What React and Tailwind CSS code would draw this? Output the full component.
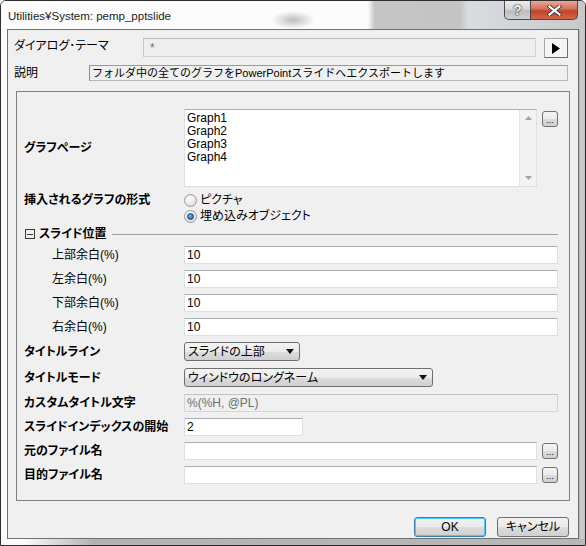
const jpFont = "[font-family:'Liberation_Sans','Noto_Sans_CJK_JP',sans-serif] [font-feature-settings:'palt']";

function Tri({ dir = "down" }) {
  if (dir === "right") {
    return (
      <svg width="8" height="11" viewBox="0 0 8 11">
        <path d="M0 0 L8 5.5 L0 11 Z" fill="#000" />
      </svg>
    );
  }
  return (
    <svg width="8" height="5" viewBox="0 0 8 5">
      <path d="M0 0 L8 0 L4 5 Z" fill="#111" />
    </svg>
  );
}

function DotsBtn({ className = "" }) {
  return (
    <div
      className={`w-[16px] h-[16px] rounded-[3px] border border-[#707070] bg-[linear-gradient(#f4f4f4_0%,#ececec_50%,#dcdcdc_51%,#d0d0d0_100%)] flex items-end justify-center text-[9px] leading-[10px] pb-[1px] ${className}`}
    >
      ...
    </div>
  );
}

function Combo({ text, className = "" }) {
  return (
    <div
      className={`h-[19px] rounded-[3px] border border-[#707070] bg-[linear-gradient(#f3f3f3_0%,#ebebeb_50%,#dddddd_51%,#cfcfcf_100%)] flex items-center pl-[3px] pr-[5px] text-[12px] ${className}`}
    >
      <span className="flex-1">{text}</span>
      <Tri />
    </div>
  );
}

function TextBox({ value, className = "", disabled }) {
  return (
    <div
      className={`h-[18px] border flex items-center px-[2px] text-[12px] leading-[16px] ${
        disabled
          ? "bg-[#f0f0f0] border-[#d5d5d5] border-t-[#c2c2c2] text-[#6d6d6d]"
          : "bg-white border-[#dbdfe6] border-t-[#abadb3]"
      } ${className}`}
    >
      {value}
    </div>
  );
}

function Radio({ checked }) {
  return (
    <div className="w-[13px] h-[13px] rounded-full border border-[#9a9a9a] bg-[radial-gradient(circle_at_40%_35%,#ffffff,#d4d4d4)] flex items-center justify-center">
      {checked && (
        <div className="w-[7px] h-[7px] rounded-full border border-[#1f4777] bg-[radial-gradient(circle_at_40%_35%,#6fb6ec,#174f92)]" />
      )}
    </div>
  );
}

function Row({ label, labelClass = "pl-[7px] font-bold", className = "", children }) {
  return (
    <div className={`flex items-center ${className}`}>
      <div className={`w-[167px] text-[12px] leading-[16px] shrink-0 ${labelClass}`}>{label}</div>
      {children}
    </div>
  );
}

function WinButton({ children, primary }) {
  return (
    <div
      className={`w-[72px] h-[20px] rounded-[3px] border flex items-center justify-center text-[12px] bg-[linear-gradient(#f2f2f2_0%,#ebebeb_50%,#dddddd_51%,#cfcfcf_100%)] ${
        primary ? "border-[#3c7fb1] shadow-[inset_0_0_0_1px_#4fc8f4]" : "border-[#707070]"
      }`}
    >
      {children}
    </div>
  );
}

export default function App() {
  return (
    <div
      className={`w-[586px] h-[546px] border border-[#2e2e2e] rounded-t-[6px] overflow-hidden flex flex-col text-black ${jpFont}`}
    >
      {/* title bar */}
      <div className="h-[28px] flex items-start [background-image:radial-gradient(ellipse_22px_9px_at_292px_19px,#bdbdbd,rgba(252,252,252,0)),linear-gradient(90deg,#fcfcfc_0%,#fcfcfc_62.8%,#c5c5c5_64%,#c4c4c4_78.6%,#d9dde1_80%,#d3d7db_86%,#c8c8c8_100%)]">
        <div className="pl-[7px] pt-[7px] text-[11.5px] text-[#1b1b1b]">Utilities¥System: pemp_pptslide</div>
        <div className="ml-auto mr-[7px] flex">
          <div className="w-[27px] h-[19px] border border-t-0 border-[#4a4a4a] rounded-bl-[5px] bg-[linear-gradient(#ececec_0%,#d6d6d6_45%,#bdbdbd_55%,#d2d2d2_100%)] flex items-center justify-center text-[14px] font-bold leading-none text-[#f4f4f4] [text-shadow:0_0_1px_#333,0_0_1px_#333,0_0_2px_#555]">
            ?
          </div>
          <div className="w-[47px] h-[19px] border border-t-0 border-l-0 border-[#4a4a4a] rounded-br-[5px] bg-[linear-gradient(#eaa898_0%,#d8735c_42%,#c4432a_55%,#d4644a_100%)] flex items-center justify-center">
            <svg width="15" height="11" viewBox="0 0 15 11">
              <path d="M2.5 1.5 L12.5 9.5 M12.5 1.5 L2.5 9.5" stroke="#3a3a3a" strokeWidth="4" strokeLinecap="square" />
              <path d="M2.5 1.5 L12.5 9.5 M12.5 1.5 L2.5 9.5" stroke="#ffffff" strokeWidth="2.2" strokeLinecap="square" />
            </svg>
          </div>
        </div>
      </div>

      {/* body */}
      <div className="flex h-[510px]">
        <div className="w-[6px] bg-[#fbfbfb]" />
        <div className="w-[572px] border border-[#707070] bg-[#f0f0f0] flex flex-col">
          {/* theme row */}
          <div className="flex items-start mt-[8px] pl-[6px]">
            <div className="w-[129px] text-[12px] leading-[14px] pt-[1px]">ダイアログ･テーマ</div>
            <div className="w-[393px] h-[19px] bg-[#eeeeee] border border-[#d2d2d2] border-t-[#bdbdbd] border-l-[#c4c4c4] flex items-center pl-[6px] text-[12px] text-[#6d6d6d]">
              *
            </div>
            <div className="ml-[8px] w-[24px] h-[20px] border border-[#a8a8a8] border-r-[#6f6f6f] border-b-[#6f6f6f] bg-[#f5f5f5] flex items-center justify-center">
              <Tri dir="right" />
            </div>
          </div>

          {/* description */}
          <div className="flex items-center h-[16px] mt-[7px] pl-[6px]">
            <div className="w-[75px] text-[12px] leading-[16px]">説明</div>
            <div className="w-[479px] h-[16px] border border-[#b8b8b8] border-l-[#8c8c8c] border-t-[#9a9a9a] flex items-center pl-[2px] text-[11px] leading-[13px] whitespace-nowrap overflow-hidden [font-feature-settings:normal]">
              フォルダ中の全てのグラフをPowerPointスライドへエクスポートします
            </div>
          </div>

          {/* panel */}
          <div className="mx-[8px] mt-[10px] h-[410px] border border-[#7f7f7f] pr-[11px] flex flex-col">
            <Row label="グラフページ" className="mt-[17px]">
              <div className="w-[356px] h-[78px] bg-white border border-[#dbdfe6] border-t-[#abadb3] flex">
                <div className="flex-1 pl-[2px] pt-[2px] text-[12px] leading-[13px]">
                  <div>Graph1</div>
                  <div>Graph2</div>
                  <div>Graph3</div>
                  <div>Graph4</div>
                </div>
                <div className="w-[17px] bg-[#f3f3f3] border-l border-[#e6e6e6] flex flex-col items-center justify-between py-[6px]">
                  <svg width="7" height="4" viewBox="0 0 7 4">
                    <path d="M0 4 L3.5 0 L7 4 Z" fill="#a4a4a4" />
                  </svg>
                  <svg width="7" height="4" viewBox="0 0 7 4">
                    <path d="M0 0 L7 0 L3.5 4 Z" fill="#a4a4a4" />
                  </svg>
                </div>
              </div>
              <DotsBtn className="ml-[5px] self-start mt-[2px]" />
            </Row>

            <div className="flex items-start mt-[5px]">
              <div className="w-[167px] pl-[7px] font-bold text-[12px] h-[16px] flex items-center">挿入されるグラフの形式</div>
              <div className="flex flex-col">
                <div className="h-[16px] flex items-center gap-[3px] text-[12px]">
                  <Radio />
                  <span>ピクチャ</span>
                </div>
                <div className="h-[16px] flex items-center gap-[3px] text-[12px]">
                  <Radio checked />
                  <span>埋め込みオブジェクト</span>
                </div>
              </div>
            </div>

            <div className="flex items-center h-[16px] mt-[2px] pl-[8px]">
              <div className="w-[10px] h-[10px] border border-[#3a3a3a] flex items-center justify-center">
                <div className="w-[6px] h-px bg-[#3a3a3a]" />
              </div>
              <div className="ml-[4px] font-bold text-[12px]">スライド位置</div>
              <div className="ml-[5px] flex-1 h-px bg-[#a0a0a0]" />
            </div>

            <Row label="上部余白(%)" labelClass="pl-[35px]" className="mt-[4px]">
              <TextBox value="10" className="flex-1" />
            </Row>
            <Row label="左余白(%)" labelClass="pl-[35px]" className="mt-[6px]">
              <TextBox value="10" className="flex-1" />
            </Row>
            <Row label="下部余白(%)" labelClass="pl-[35px]" className="mt-[6px]">
              <TextBox value="10" className="flex-1" />
            </Row>
            <Row label="右余白(%)" labelClass="pl-[35px]" className="mt-[6px]">
              <TextBox value="10" className="flex-1" />
            </Row>

            <Row label="タイトルライン" className="mt-[6px]">
              <Combo text="スライドの上部" className="w-[116px]" />
            </Row>
            <Row label="タイトルモード" className="mt-[7px]">
              <Combo text="ウィンドウのロングネーム" className="w-[249px]" />
            </Row>
            <Row label="カスタムタイトル文字" className="mt-[7px]">
              <TextBox value="%(%H, @PL)" disabled className="flex-1 text-[11px]" />
            </Row>
            <Row label="スライドインデックスの開始" className="mt-[6px]">
              <TextBox value="2" className="w-[119px]" />
            </Row>
            <Row label="元のファイル名" className="mt-[6px]">
              <TextBox value="" className="w-[356px]" />
              <DotsBtn className="ml-[5px]" />
            </Row>
            <Row label="目的ファイル名" className="mt-[6px]">
              <TextBox value="" className="w-[356px]" />
              <DotsBtn className="ml-[5px]" />
            </Row>
          </div>

          {/* buttons */}
          <div className="flex justify-end gap-[11px] mt-[16px] pr-[9px]">
            <WinButton primary>OK</WinButton>
            <WinButton>キャンセル</WinButton>
          </div>
        </div>
        <div className="w-[6px] [background-image:linear-gradient(90deg,#b4b4b4,#d2d2d2_45%,#bdbdbd_100%)]" />
      </div>

      {/* bottom frame */}
      <div className="h-[6px] [background-image:linear-gradient(90deg,#fbfbfb_0%,#fbfbfb_4%,#b2b2b2_16%,#b8b8b8_100%)]" />
    </div>
  );
}
